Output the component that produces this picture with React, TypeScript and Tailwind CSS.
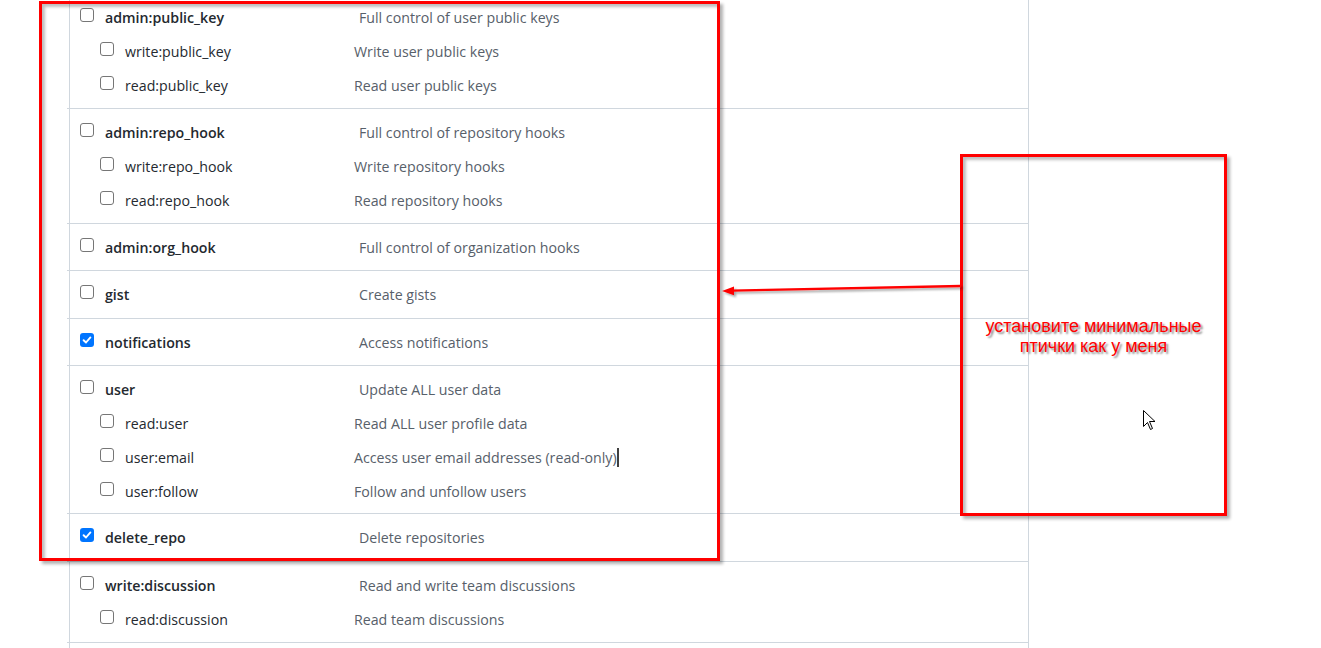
import React from "react";

type Group = { name: string; desc: string; checked?: boolean; subs: [string, string][]; pb: string };

const groups: Group[] = [
  { name: "admin:public_key", desc: "Full control of user public keys", pb: "pb-[10px]", subs: [["write:public_key", "Write user public keys"], ["read:public_key", "Read user public keys"]] },
  { name: "admin:repo_hook", desc: "Full control of repository hooks", pb: "pb-[10px]", subs: [["write:repo_hook", "Write repository hooks"], ["read:repo_hook", "Read repository hooks"]] },
  { name: "admin:org_hook", desc: "Full control of organization hooks", pb: "pb-[10px]", subs: [] },
  { name: "gist", desc: "Create gists", pb: "pb-[11px]", subs: [] },
  { name: "notifications", desc: "Access notifications", checked: true, pb: "pb-[10px]", subs: [] },
  { name: "user", desc: "Update ALL user data", pb: "pb-[9px]", subs: [["read:user", "Read ALL user profile data"], ["user:email", "Access user email addresses (read-only)"], ["user:follow", "Follow and unfollow users"]] },
  { name: "delete_repo", desc: "Delete repositories", checked: true, pb: "pb-[11px]", subs: [] },
  { name: "write:discussion", desc: "Read and write team discussions", pb: "pb-[10px]", subs: [["read:discussion", "Read team discussions"]] },
];

function Box({ checked, className }: { checked?: boolean; className?: string }) {
  if (checked) {
    return (
      <span className={"flex h-[14px] w-[14px] shrink-0 items-center justify-center rounded-[3px] bg-[#0075ff] " + (className ?? "")}>
        <svg width="10" height="10" viewBox="0 0 10 10">
          <path d="M1.6 5.2 L4 7.5 L8.4 2.4" fill="none" stroke="#fff" strokeWidth="1.9" strokeLinecap="round" strokeLinejoin="round" />
        </svg>
      </span>
    );
  }
  return <span className={"block h-[14px] w-[14px] shrink-0 rounded-[3px] border border-[#767676] bg-white " + (className ?? "")} />;
}

export default function App() {
  return (
    <div className="relative h-[648px] w-[1321px] overflow-hidden bg-white" style={{ fontFamily: '"Open Sans", "Noto Sans", sans-serif' }}>
      <div className="ml-[69px] mt-[-6px] w-[960px] border-x border-[#d0d7de] text-[14.2px] leading-[24px]">
        {groups.map((g) => (
          <div key={g.name} className={"ml-[-3px] border-b border-[#d0d7de] pl-[3px] pt-[12px] " + g.pb}>
            <div className="flex h-[24px] items-start">
              <Box checked={g.checked} className="ml-[10px] mt-[2px]" />
              <span className="ml-[11px] w-[254px] font-semibold text-[#24292f]">{g.name}</span>
              <span className="text-[#57606a]">{g.desc}</span>
            </div>
            {g.subs.map(([n, d]) => (
              <div key={n} className="mt-[10px] flex h-[24px] items-start">
                <Box className="ml-[30px] mt-[2px]" />
                <span className="ml-[11px] w-[229px] text-[#24292f]">{n}</span>
                <span className="relative text-[#57606a]">
                  {d}
                  {n === "user:email" && <span className="absolute right-[-2px] top-[2px] h-[19px] w-[2px] bg-[#404040]" />}
                </span>
              </div>
            ))}
          </div>
        ))}
        <div className="h-[40px]" />
      </div>

      {/* annotation box 1 */}
      <div className="absolute left-[39px] top-[1px] h-[560px] w-[681px] border-[3px] border-[#ff0000] shadow-[3px_3px_3px_rgba(0,0,0,0.3),inset_3px_3px_3px_rgba(0,0,0,0.25)]" />

      {/* annotation box 2 */}
      <div className="absolute left-[960px] top-[154px] flex h-[362px] w-[267px] flex-col items-center border-[3px] border-[#ff0000] pt-[159px] shadow-[3px_3px_3px_rgba(0,0,0,0.3),inset_3px_3px_3px_rgba(0,0,0,0.25)]">
        <div className="whitespace-nowrap text-center text-[18px] leading-[20px] text-[#ff0000] [text-shadow:2px_2px_2px_rgba(0,0,0,0.45)]" style={{ fontFamily: '"Liberation Sans", Arial, sans-serif' }}>
          установите минимальные
          <br />
          птички как у меня
        </div>
      </div>

      {/* arrow */}
      <svg className="absolute left-0 top-0" width="1321" height="648" style={{ pointerEvents: "none" }}>
        <defs>
          <filter id="sh" x="-10%" y="-50%" width="120%" height="300%">
            <feDropShadow dx="2" dy="2" stdDeviation="1.2" floodColor="#000" floodOpacity="0.35" />
          </filter>
        </defs>
        <g filter="url(#sh)">
          <line x1="961" y1="286" x2="732" y2="290.6" stroke="#ff0000" strokeWidth="2.4" />
          <path d="M722 291 L734 286.6 L734 295.2 Z" fill="#ff0000" />
        </g>
        {/* mouse cursor */}
        <path d="M1143.5 410.5 L1143.5 426.5 L1147.5 422.5 L1150.5 429.5 L1152.5 428.5 L1149.5 421.5 L1155 421.5 Z" fill="#fff" stroke="#000" strokeWidth="1" strokeLinejoin="miter" />
      </svg>
    </div>
  );
}
